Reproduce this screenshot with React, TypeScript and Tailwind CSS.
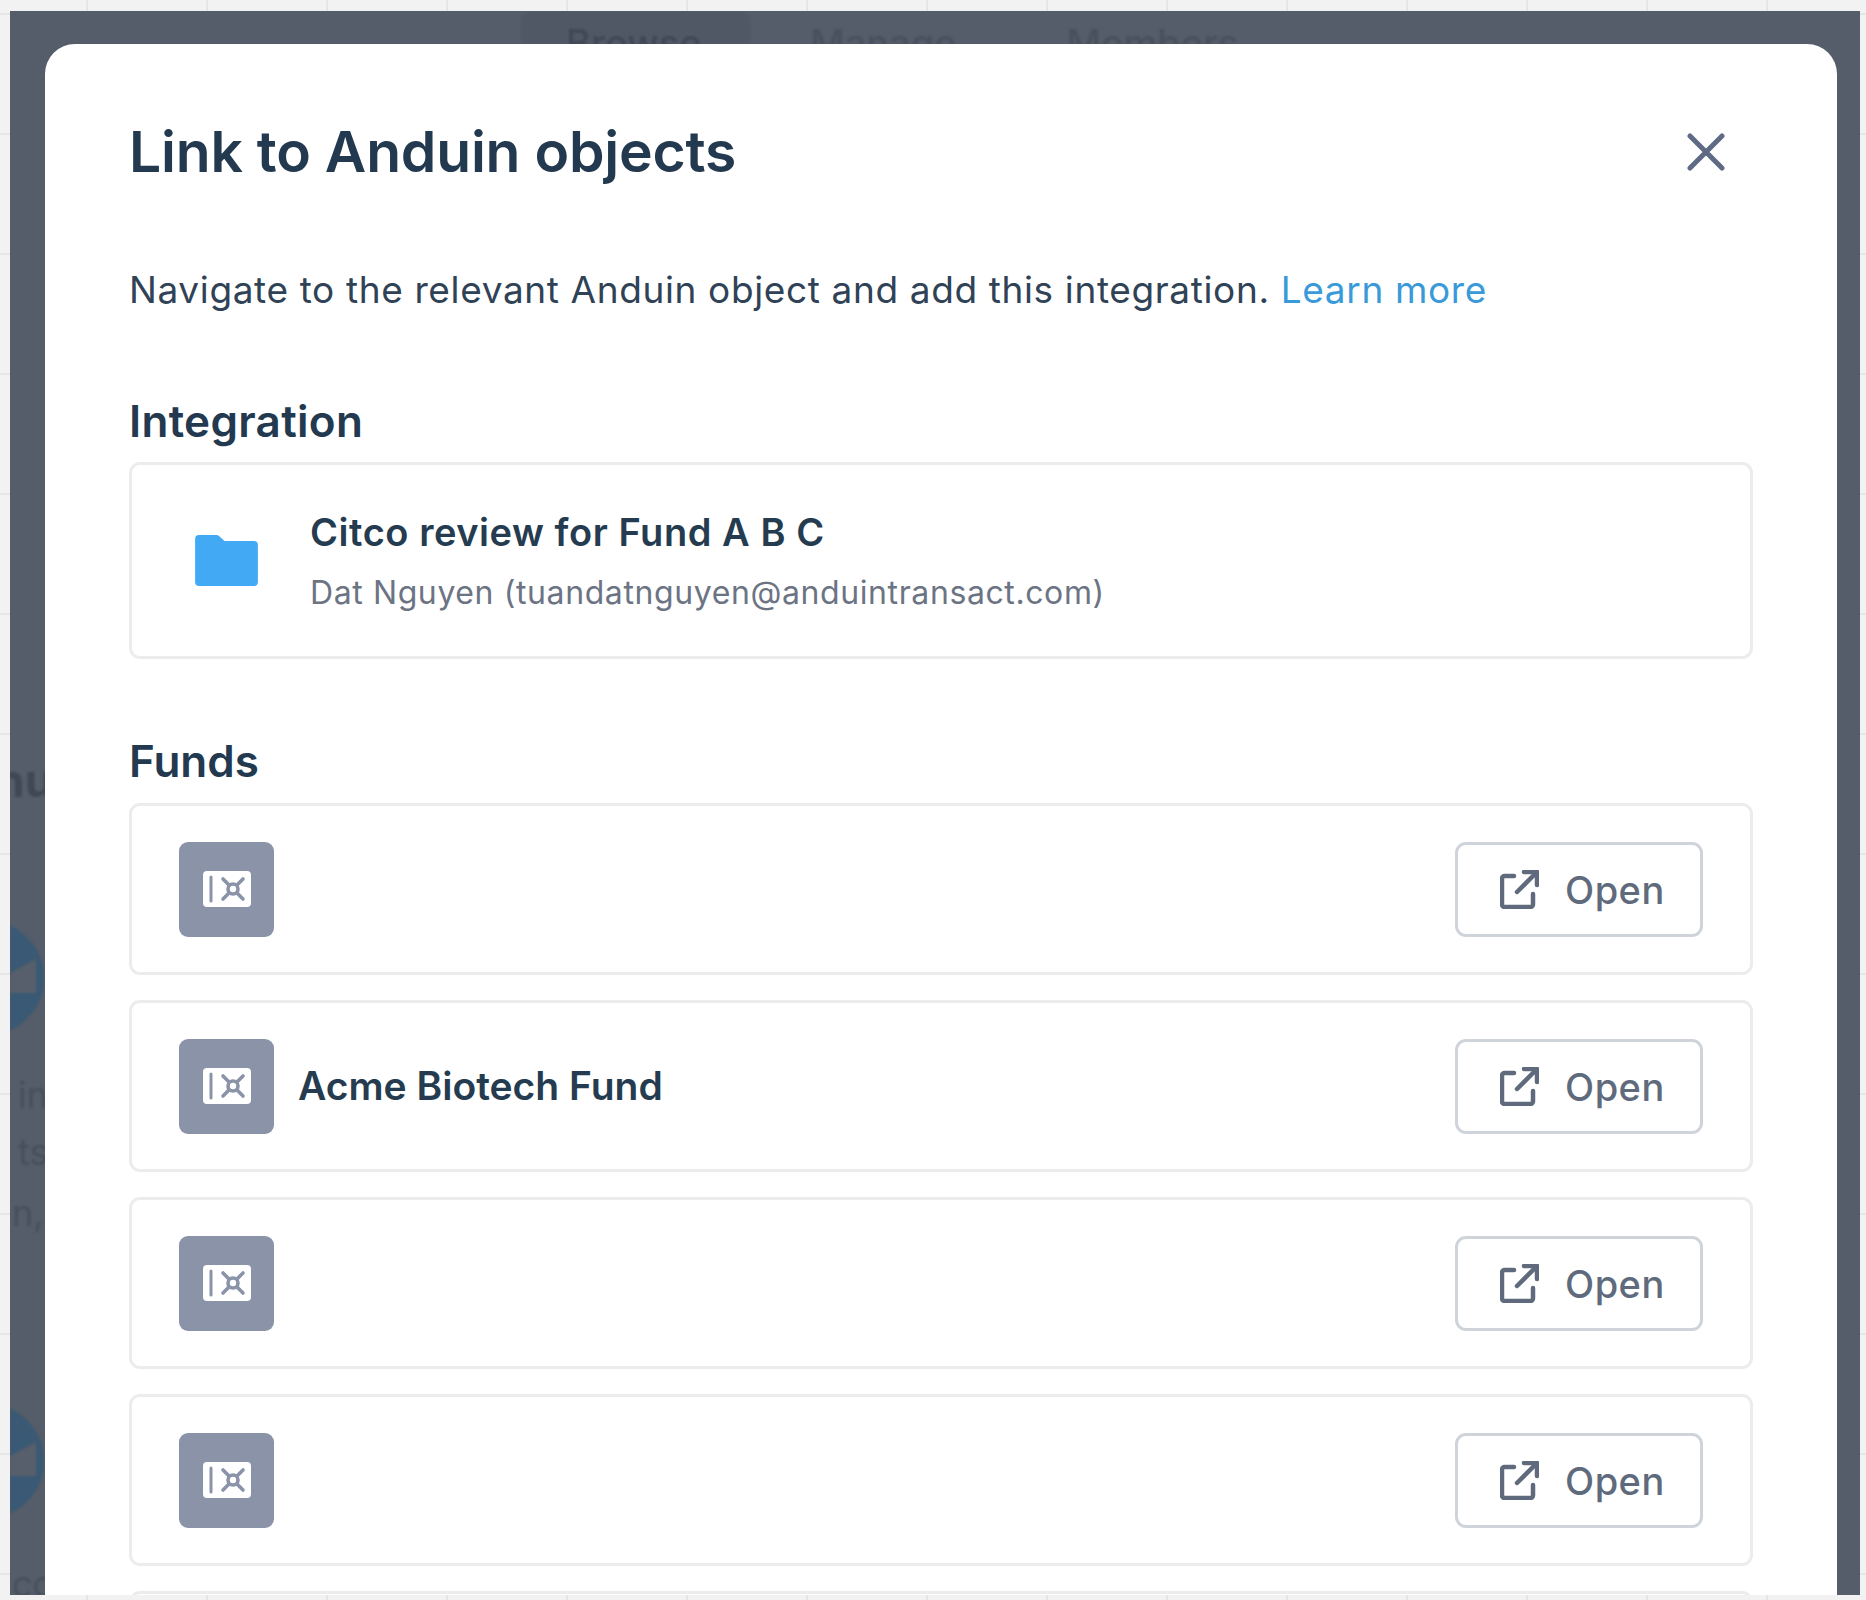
const FUNDS = ["", "Acme Biotech Fund", "", "", ""];

function SafeIcon() {
  return (
    <div className="flex h-[95px] w-[95px] shrink-0 items-center justify-center rounded-[9px] bg-[#8a93a8]">
      <svg width="48" height="36" viewBox="0 0 48 36" fill="none">
        <rect width="48" height="36" rx="4" fill="#fff" />
        <path d="M8 6v24" stroke="#8a93a8" strokeWidth="3" strokeLinecap="round" />
        <path
          d="M20 8l5.5 5.5M40 8l-5.5 5.5M20 28l5.500-5.500M40 28l-5.500-5.500"
          stroke="#8a93a8"
          strokeWidth="3.6"
          strokeLinecap="round"
        />
        <circle cx="30" cy="18" r="5" stroke="#8a93a8" strokeWidth="3.6" />
      </svg>
    </div>
  );
}

function OpenIcon() {
  return (
    <svg width="39" height="39" viewBox="0 0 39 39" fill="none" stroke="#5f6b7d" strokeWidth="4.5" strokeLinecap="round" strokeLinejoin="round">
      <path d="M14 6H4.500A2.500 2.500 0 0 0 2 8.500v26A2.500 2.500 0 0 0 4.500 37h26a2.500 2.500 0 0 0 2.500-2.500V24" />
      <path d="M17 22L36 3" />
      <path d="M24 2h13v13" />
    </svg>
  );
}

function FundRow({ name }: { name: string }) {
  return (
    <div className="flex h-[172px] shrink-0 items-center rounded-[11px] border-[3px] border-[#ececef] pl-[47px] pr-[47px]">
      <SafeIcon />
      <span className="ml-[24px] flex-1 text-[39px] font-semibold text-[#253c50]">{name}</span>
      <button className="flex h-[95px] w-[248px] items-center rounded-[11px] border-[3px] border-[#cfd3da] pl-[42px] text-[38px] font-medium text-[#5f6b7d]">
        <OpenIcon />
        <span className="ml-[26px] translate-y-px tracking-[0.5px]">Open</span>
      </button>
    </div>
  );
}

function BlurredLogo({ className }: { className: string }) {
  return (
    <svg className={`shrink-0 blur-[1px] ${className}`} width="35" height="115" viewBox="0 0 35 115">
      <circle cx="-23" cy="57" r="57" fill="#3a5974" />
      <path d="M0 52L26 38v34H0z" fill="#565f6b" />
    </svg>
  );
}

export default function App() {
  return (
    <div className="h-[1600px] overflow-hidden bg-[#f2f2f2] bg-[linear-gradient(#e6e6e6_2px,transparent_2px),linear-gradient(90deg,#e6e6e6_2px,transparent_2px)] bg-[size:120px_120px] bg-[position:86px_13px] pl-[10px] pr-[6px] pt-[11px] font-['Inter',sans-serif]">
      <div className="flex h-[1584px] overflow-hidden bg-[#545d69] pr-[23px]">
        {/* dimmed page left of the dialog */}
        <div className="flex w-[35px] shrink-0 flex-col overflow-hidden pt-[735px] text-[36px] text-[#484f5b]">
          <div className="-ml-[14px] text-[46px] font-bold text-[#3f4854] blur-[1px]">nu</div>
          <BlurredLogo className="mt-[106px]" />
          <div className="mt-[32px] ml-[8px] blur-[1px]">in</div>
          <div className="mt-[3px] ml-[8px] blur-[1px]">ts</div>
          <div className="mt-[7px] ml-[2px] blur-[1px]">n,</div>
          <BlurredLogo className="mt-[164px]" />
          <div className="mt-[38px] ml-[2px] blur-[1px]">cc</div>
        </div>

        <div className="flex min-w-0 flex-1 flex-col">
          {/* dimmed tabs above the dialog */}
          <div className="flex h-[33px] shrink-0 overflow-hidden pl-[476px] text-[38px] leading-[64px] font-medium text-[#48515d]">
            <div className="h-[33px] w-[229px] shrink-0 rounded-t-[12px] bg-[#4f5864] pl-[45px] text-[#3f4854] blur-[1px]">Browse</div>
            <div className="ml-[60px] shrink-0 blur-[1px]">Manage</div>
            <div className="ml-[110px] shrink-0 blur-[1px]">Members</div>
          </div>

          <div className="h-[1700px] shrink-0 rounded-t-[30px] bg-white px-[84px] pt-[74px]">
            <div className="flex items-start justify-between">
              <h1 className="text-[57px] leading-[68px] font-semibold tracking-[-0.2px] text-[#22394f]">Link to Anduin objects</h1>
              <svg className="mt-[15px] mr-[28px]" width="38" height="38" viewBox="0 0 38 38" fill="none" stroke="#5f6b85" strokeWidth="5" strokeLinecap="round">
                <path d="M3 3l32 32M35 3L3 35" />
              </svg>
            </div>
            <p className="mt-[80px] text-[37px] leading-[48px] tracking-[0.63px] text-[#2f4256]">
              Navigate to the relevant Anduin object and add this integration. <span className="text-[#3a9ad9]">Learn more</span>
            </p>
            <h2 className="mt-[81px] text-[44px] leading-[52px] font-semibold tracking-[0.3px] text-[#22394f]">Integration</h2>
            <div className="mt-[15px] flex h-[197px] items-center rounded-[11px] border-[3px] border-[#ececef] pl-[63px]">
              <svg width="63" height="51" viewBox="0 0 64 52">
                <path d="M0 4a4 4 0 0 1 4-4h17c2 0 3 .600 4.500 2l4.500 4h30a4 4 0 0 1 4 4v38a4 4 0 0 1-4 4H4a4 4 0 0 1-4-4z" fill="#42a9f5" />
              </svg>
              <div className="ml-[52px]">
                <div className="text-[38px] leading-[48px] font-semibold tracking-[0.55px] text-[#253c50]">Citco review for Fund A B C</div>
                <div className="mt-[16px] text-[32px] leading-[42px] tracking-[0.6px] text-[#6c7484]">Dat Nguyen (tuandatnguyen@anduintransact.com)</div>
              </div>
            </div>
            <h2 className="mt-[76px] text-[44px] leading-[52px] font-semibold text-[#22394f]">Funds</h2>
            <div className="mt-[16px] flex flex-col gap-[25px]">
              {FUNDS.map((name, i) => (
                <FundRow key={i} name={name} />
              ))}
            </div>
          </div>
        </div>
      </div>
    </div>
  );
}
